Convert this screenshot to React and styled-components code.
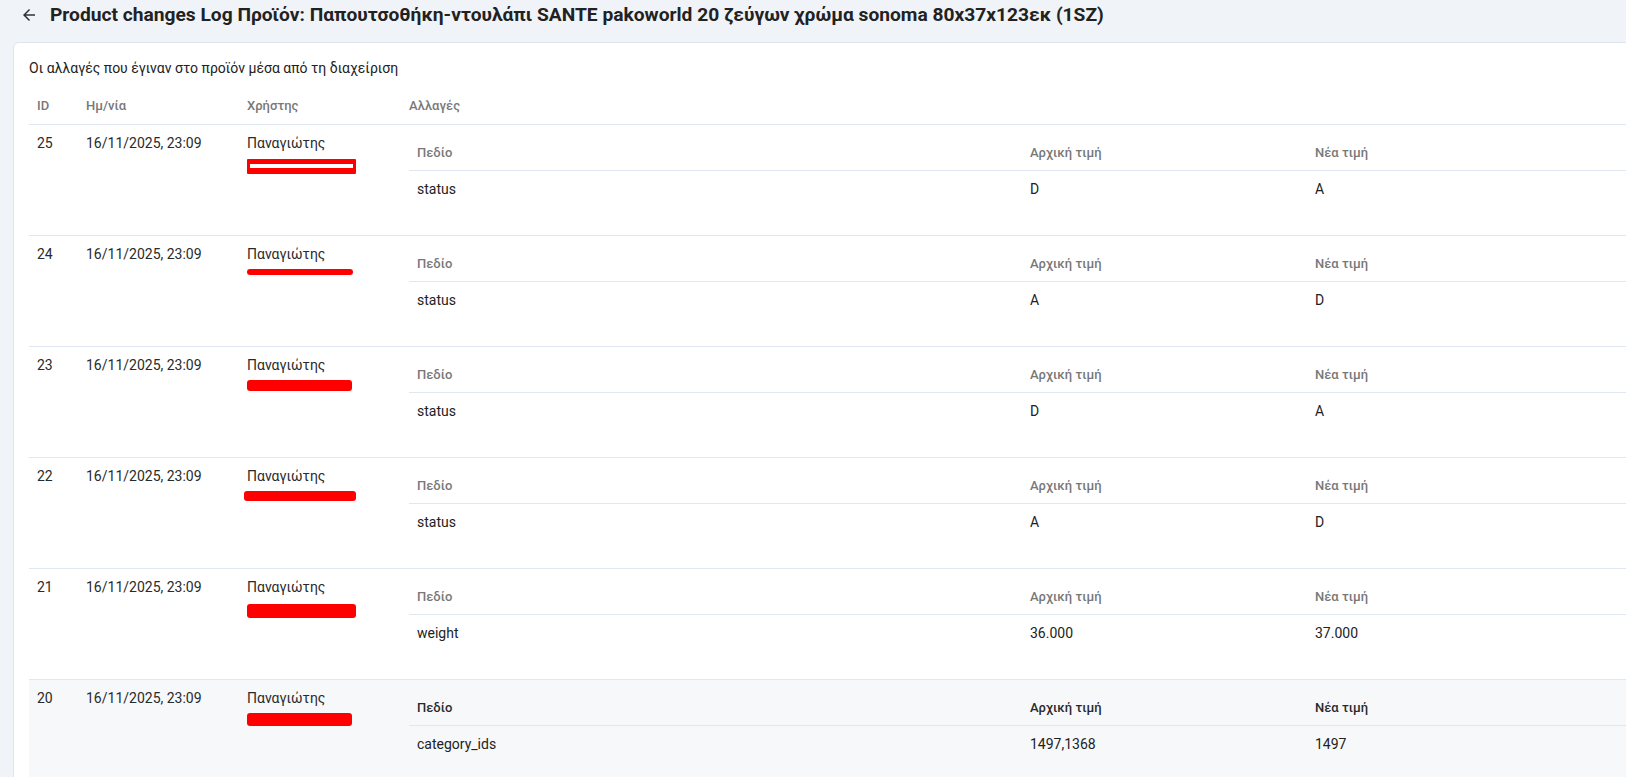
import React from "react";
import styled, { createGlobalStyle, css } from "styled-components";

const GlobalStyle = createGlobalStyle`
  html, body {
    margin: 0;
    padding: 0;
    overflow: hidden;
    background: #f0f3f8;
    font-family: Roboto, "Noto Sans", "Liberation Sans", sans-serif;
    color: #222;
  }
  * {
    box-sizing: border-box;
  }
`;

const logs = [
  { id: 25, date: "16/11/2025, 23:09", user: "Παναγιώτης", field: "status", from: "D", to: "A", mark: { w: 109, h: 15, shift: 3, outline: true } },
  { id: 24, date: "16/11/2025, 23:09", user: "Παναγιώτης", field: "status", from: "A", to: "D", mark: { w: 106, h: 6, shift: 2 } },
  { id: 23, date: "16/11/2025, 23:09", user: "Παναγιώτης", field: "status", from: "D", to: "A", mark: { w: 105, h: 11, shift: 2 } },
  { id: 22, date: "16/11/2025, 23:09", user: "Παναγιώτης", field: "status", from: "A", to: "D", mark: { w: 112, h: 10, shift: 2, left: -3 } },
  { id: 21, date: "16/11/2025, 23:09", user: "Παναγιώτης", field: "weight", from: "36.000", to: "37.000", mark: { w: 109, h: 14, shift: 4 } },
  { id: 20, date: "16/11/2025, 23:09", user: "Παναγιώτης", field: "category_ids", from: "1497,1368", to: "1497", mark: { w: 105, h: 13, shift: 2 }, active: true },
];

const BackArrow = () => (
  <svg width="18" height="18" viewBox="0 0 24 24" fill="#333">
    <path d="M20 11H7.83l5.59-5.59L12 4l-8 8 8 8 1.41-1.41L7.83 13H20v-2z" />
  </svg>
);

export default function App() {
  return (
    <>
      <GlobalStyle />
      <Page>
        <TitleBar>
          <BackButton>
            <BackArrow />
          </BackButton>
          <Title>
            Product changes Log Προϊόν: Παπουτσοθήκη-ντουλάπι SANTE pakoworld 20 ζεύγων χρώμα sonoma 80x37x123εκ (1SZ)
          </Title>
        </TitleBar>

        <Card>
          <Subtitle>Οι αλλαγές που έγιναν στο προϊόν μέσα από τη διαχείριση</Subtitle>

          <LogRow>
            <HeadCell>ID</HeadCell>
            <HeadCell>Ημ/νία</HeadCell>
            <HeadCell>Χρήστης</HeadCell>
            <HeadCell>Αλλαγές</HeadCell>
          </LogRow>

          {logs.map((log) => (
            <LogRow key={log.id} $active={log.active}>
              <Cell>{log.id}</Cell>
              <Cell>{log.date}</Cell>
              <Cell>
                <div>{log.user}</div>
                <NameLine>
                  <Redacted
                    $outline={log.mark.outline}
                    style={{
                      width: log.mark.w,
                      height: log.mark.h,
                      top: log.mark.shift || 0,
                      left: log.mark.left || 0,
                    }}
                  />
                </NameLine>
              </Cell>
              <ChangesCell>
                <ChangeTable>
                  <ChangeHead $active={log.active}>Πεδίο</ChangeHead>
                  <ChangeHead $active={log.active}>Αρχική τιμή</ChangeHead>
                  <ChangeHead $active={log.active}>Νέα τιμή</ChangeHead>
                  <ChangeCell>{log.field}</ChangeCell>
                  <ChangeCell>{log.from}</ChangeCell>
                  <ChangeCell>{log.to}</ChangeCell>
                </ChangeTable>
              </ChangesCell>
            </LogRow>
          ))}
        </Card>
      </Page>
    </>
  );
}

const Page = styled.div`
  padding: 3px 0 0 13px;
  width: 1760px;
`;

const TitleBar = styled.div`
  display: flex;
  align-items: center;
  gap: 12px;
  height: 24px;
  padding-left: 7px;
  margin-bottom: 15px;
`;

const BackButton = styled.span`
  display: flex;
  width: 18px;
  height: 18px;
`;

const Title = styled.h1`
  margin: 0;
  font-size: 19.2px;
  line-height: 24px;
  font-weight: 700;
  color: #222;
  white-space: nowrap;
`;

const Card = styled.div`
  background: #fff;
  border: 1px solid #dfe5ee;
  border-radius: 6px;
  padding: 15px;
`;

const Subtitle = styled.div`
  font-size: 14px;
  line-height: 20px;
  color: #222;
  margin-bottom: 10px;
`;

const LogRow = styled.div`
  display: grid;
  grid-template-columns: 49px 161px 162px 1fr;
  border-bottom: 1px solid #e1e7f0;
  font-size: 14px;
  line-height: 20px;
  color: #2a2a2a;
  ${(p) =>
    p.$active &&
    css`
      background: #f6f8fa;
    `}
`;

const HeadCell = styled.div`
  padding: 8px;
  font-size: 13px;
  font-weight: 500;
  color: #787878;
`;

const Cell = styled.div`
  padding: 8px;
`;

const NameLine = styled.div`
  position: relative;
  height: 20px;
`;

const Redacted = styled.span`
  position: absolute;
  top: 0;
  margin-top: 3px;
  background: #f00;
  border-radius: 3px;
  ${(p) =>
    p.$outline &&
    css`
      background: #fff;
      border: 3px solid #f00;
      border-radius: 1px;
      box-shadow: inset 0 2px 0 #f00, inset 0 -3px 0 #f00;
    `}
`;

const ChangesCell = styled.div`
  padding: 8px 8px 28px;
`;

const ChangeTable = styled.div`
  display: grid;
  grid-template-columns: 613px 285px 1fr;
`;

const ChangeHead = styled.div`
  padding: 10px 8px 7px;
  font-size: 13px;
  line-height: 20px;
  font-weight: 500;
  color: ${(p) => (p.$active ? "#2a2a2a" : "#787878")};
  border-bottom: 1px solid #e1e7f0;
`;

const ChangeCell = styled.div`
  padding: 8px;
  font-size: 14px;
  line-height: 20px;
  color: #222;
`;
